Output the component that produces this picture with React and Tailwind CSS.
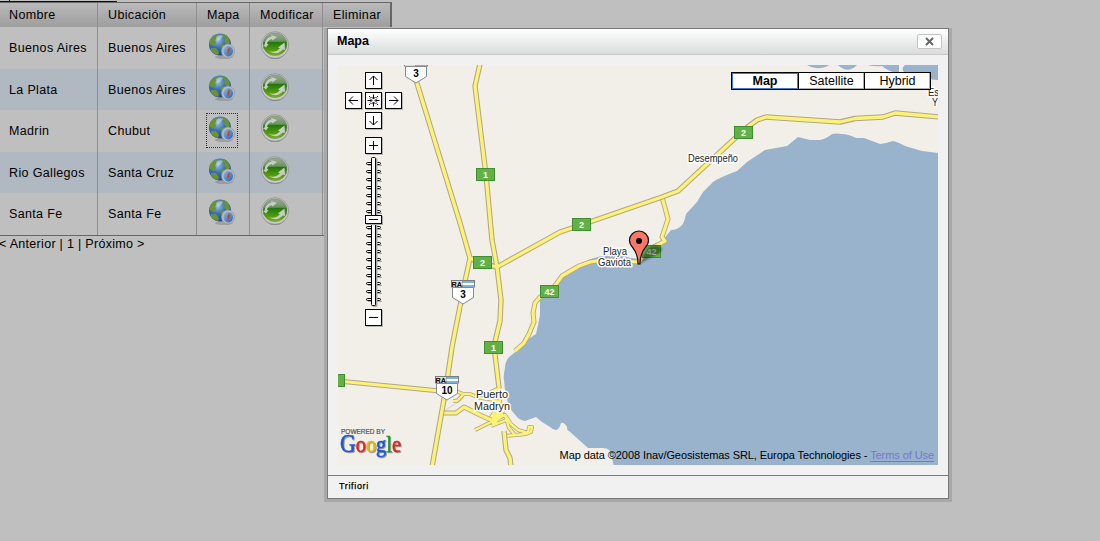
import React from "react";

const rows = [
  { name: "Buenos Aires", place: "Buenos Aires", h: "h-[42px]" },
  { name: "La Plata", place: "Buenos Aires", h: "h-[41px]" },
  { name: "Madrin", place: "Chubut", h: "h-[42px]", focused: true },
  { name: "Rio Gallegos", place: "Santa Cruz", h: "h-[41px]" },
  { name: "Santa Fe", place: "Santa Fe", h: "h-[42px]" },
];

const COLS = "grid grid-cols-[98px_99px_53px_73px_69px]";

function GlobeIcon() {
  return (
    <svg width="28" height="30" viewBox="0 0 28 30">
      <defs>
        <radialGradient id="sea" cx="0.4" cy="0.3" r="0.75">
          <stop offset="0" stopColor="#9cc0e0" />
          <stop offset="0.45" stopColor="#3a70b8" />
          <stop offset="1" stopColor="#1d4488" />
        </radialGradient>
        <linearGradient id="dial" x1="0" y1="0" x2="1" y2="1">
          <stop offset="0" stopColor="#8fb2d6" />
          <stop offset="1" stopColor="#2a66b2" />
        </linearGradient>
      </defs>
      <ellipse cx="16" cy="25" rx="9" ry="2" fill="#8a8a8a" opacity="0.6" />
      <circle cx="12" cy="12.500" r="11" fill="url(#sea)" />
      <path d="M2 8Q5 3 9 2.500L10 5L7 8L8 11L5 14L2 12ZM13 2Q18 2 21 7L22 11L19 13L16 9L17 6L14 5ZM3 16L8 16L11 20L10 23Q5 22 3 18ZM13 12L17 13L15 17L12 15Z" fill="#6a9430" />
      <path d="M8 5Q12 2 15 4L12 8L9 9Z" fill="#c6d8e6" opacity="0.6" />
      <ellipse cx="20" cy="19" rx="6.500" ry="7" fill="#b4bbc3" stroke="#8c949d" strokeWidth="0.7" />
      <ellipse cx="20.300" cy="19.300" rx="4.700" ry="5.200" fill="url(#dial)" />
      <path d="M19.500 22.500L19.800 17L21.800 15.500L21.200 20Z" fill="#c43a22" />
    </svg>
  );
}

function RefreshIcon() {
  return (
    <svg width="30" height="31" viewBox="0 0 30 31">
      <defs>
        <linearGradient id="leaf" x1="0" y1="0" x2="0" y2="1">
          <stop offset="0" stopColor="#9aac94" />
          <stop offset="0.36" stopColor="#6b945e" />
          <stop offset="0.42" stopColor="#23780b" />
          <stop offset="1" stopColor="#77b414" />
        </linearGradient>
      </defs>
      <ellipse cx="15" cy="17" rx="12.500" ry="12" fill="#666a66" />
      <ellipse cx="15" cy="15" rx="13.700" ry="13.300" fill="#cacaca" stroke="#909090" strokeWidth="0.8" />
      <ellipse cx="15" cy="14.300" rx="12" ry="11.300" fill="url(#leaf)" stroke="#66825f" strokeWidth="0.5" />
      <path d="M4.500 15Q5 8 11.500 6.500L11 5L17 7L12.500 10.500L12 9Q7.500 10 7 14L8.500 14L6 17.500L3 15Z" fill="#c6cdc2" />
      <path d="M9 21Q15 23.500 20 18.500L18 17.500L24.500 12.500L25 20L22.800 19.500Q17 26 9 21Z" fill="#c6cdc2" />
    </svg>
  );
}

function Cell({ children, last }) {
  return (
    <div className={last ? "flex items-center pt-px pl-[10px]" : "flex items-center border-r border-[#8f8f8f] pt-px pl-[9px] nth-2:pl-[10px] nth-3:pl-[10px] nth-4:pl-[10px]"}>
      {children}
    </div>
  );
}

function PlacesTable() {
  return (
    <div className="w-[392px]">
      <div className={COLS + " h-[25px] border-t border-r-2 border-[#666] bg-linear-to-b from-[#bababa] to-[#9e9e9e]"}>
        <Cell>Nombre</Cell>
        <Cell>Ubicación</Cell>
        <Cell>Mapa</Cell>
        <Cell>Modificar</Cell>
        <Cell last>Eliminar</Cell>
      </div>
      {rows.map((r, i) => (
        <div key={r.name} className={COLS + " " + r.h + (i % 2 ? " bg-[#b0b8c1]" : " bg-[#bfbfbf]")}>
          <Cell>{r.name}</Cell>
          <Cell>{r.place}</Cell>
          <div className="flex items-start border-r border-[#8f8f8f] pt-[3px] pl-[9px]">
            <div className={"flex h-[35px] w-8 items-start border border-dotted pt-[1px] pl-[1px] " + (r.focused ? "border-[#4a1590]" : "border-transparent")}>
              <GlobeIcon />
            </div>
          </div>
          <div className="flex items-start border-r border-[#8f8f8f] pt-[3px] pl-[10px]">
            <RefreshIcon />
          </div>
          <div />
        </div>
      ))}
      <div className="h-px bg-[#666]" />
    </div>
  );
}

const ROADS = [
  "M416 80L460 223L470 258L465 281L452 347L446 388L432 467",
  "M480 64L475 86L486 175L492 240L497 267L501 300L500 321L494 346L499 388",
  "M470 258L480 263L497 267L560 232L581 225L662 197L678 191L745 129L757 120L766 117L840 122L855 118.500L883 117L895 113L939 117",
];
const MINOR = [
  "M338 381L440 391",
  "M662 197L668 219L662 237L665 241L650 249L639 262L602 260L590 262L579 266L562 276L557 283L549 293L540 297L535 303L533 313L534 322L529 334L524 343L515 351",
  "M442 413L456 413L464 407L480 415L491 420",
];
const STREETS = [
  "M456 391L463 394L470 394L480 398L490 399L499 402M453 401L457 401L463 395",
  "M499 388L489 393M499 388L500 403L490 419",
  "M475 430L505 415L511 424L518 430L528 433L529 427L532 427L531 432L526 434L506 436",
  "M489 419L503 411L499 403M503 411L494 424L489 419M491 426L509 419M505 415L509 428L515 435",
];

function Roads({ list, outer, inner }) {
  return (
    <g fill="none" strokeLinejoin="round">
      {list.map((d) => <path key={d} d={d} stroke="#b2a58d" strokeWidth={outer} />)}
      {list.map((d) => <path key={d + "i"} d={d} stroke="#fcf374" strokeWidth={inner} />)}
    </g>
  );
}

function GreenSign({ x, y, text }) {
  return (
    <g>
      <rect x={x + 0.5} y={y + 0.5} width="18" height="12" fill="#62b146" stroke="#3f8f32" />
      {text && <text x={x + 9.500} y={y + 10} textAnchor="middle" fontSize="9" fontWeight="bold" fill="#fff">{text}</text>}
    </g>
  );
}

function RouteShield({ x, y, text, banner = true }) {
  return (
    <g>
      <rect x={x} y={y} width="24" height="7.500" fill="#777c7e" />
      <rect x={x + 1} y={y + 1} width="10" height="6" fill="#ddd" />
      {banner && <text x={x + 0.5} y={y + 7} fontSize="7" fontWeight="bold" textLength="10.500" lengthAdjust="spacingAndGlyphs">RA</text>}
      <rect x={x + 11.500} y={y + 1} width="11.500" height="6" fill="#7db5d6" />
      <rect x={x + 11.500} y={y + 3} width="11.500" height="2" fill="#fff" />
      <path d={`M${x + 1.500} ${y + 7.500}H${x + 22.500}V${y + 17.500}L${x + 12} ${y + 24}L${x + 1.500} ${y + 17.500}Z`} fill="#fff" stroke="#888" />
      <text x={x + 12} y={y + 18} textAnchor="middle" fontSize="10" fontWeight="bold">{text}</text>
    </g>
  );
}

function Halo({ x, y, size, len, children }) {
  return (
    <text x={x} y={y} fontSize={size} textLength={len} lengthAdjust="spacingAndGlyphs" fill="#222" style={{ paintOrder: "stroke" }} stroke="#fff" strokeWidth="3" strokeLinejoin="round">
      {children}
    </text>
  );
}

function MapDrawing() {
  return (
    <svg className="block" width="600" height="400" viewBox="338 65 600 400" fontFamily="Liberation Sans, Arial, sans-serif">
      <defs>
        <filter id="soft"><feGaussianBlur stdDeviation="1.200" /></filter>
      </defs>
      <rect x="338" y="65" width="600" height="400" fill="#f2efe9" />
      <g fill="#99b3cc">
        <path d="M938 153L922 151L905 146Q898 142 893 141L886 143L880 144L872 141L864 138L856 138Q848 134 842 134Q836 133 832 134Q826 139 820 140L810 140L798 137L787 146L765 150L747 162L737 171Q718 178 713 182L703 192L697 202L686 214Q684 224 681 226Q677 230 671 230L663 240Q659 249 655 250L642 259L630 258L625 256L601 256L588 260L580 267L563 277L556 285L553 298L540 298L540 315L538 325L536 334L530 338L524 345L518 350L509 357Q505 362 505 368Q503 377 504 380L505 390L508 403Q509 408 512 411L518 418Q522 421 525 421L536 417L542 422L550 427Q553 430 556 430Q559 430 561 423Q564 422 567 427Q567 431 569 431L588 448L602 448Q608 448 610 451L614 466H938Z" />
        <path d="M807 65Q816 71 828 66L829 65ZM838 65Q847 74 856 66L857 65ZM868 65Q875 67 882 66Q892 74 899 72V65ZM905 65Q900 69 905 73L920 76Q930 80 938 80V65Z" />
      </g>
      <path d="M444 411L463 399" stroke="#d8d4cb" />
      <Roads list={STREETS} outer="4" inner="2.400" />
      <Roads list={MINOR} outer="5" inner="3.200" />
      <Roads list={["M504 431L506 450L510 458L511 467", ...ROADS]} outer="5.400" inner="3.300" />
      <path d="M491 420L498 409L504 415L494 425" fill="#fcf374" />
      <GreenSign x={476} y={168} text="1" />
      <GreenSign x={473} y={256} text="2" />
      <GreenSign x={572} y={218} text="2" />
      <GreenSign x={734} y={126} text="2" />
      <GreenSign x={540} y={285} text="42" />
      <GreenSign x={484} y={341} text="1" />
      <GreenSign x={326} y={374} />
      <GreenSign x={642} y={245} text="42" />
      <RouteShield x={404} y={59} text="3" banner={false} />
      <RouteShield x={451} y={280} text="3" />
      <RouteShield x={435} y={376} text="10" />
      <Halo x={688} y={162} size={10} len={50}>Desempeño</Halo>
      <Halo x={603} y={255} size={10} len={24}>Playa</Halo>
      <Halo x={598} y={266} size={10} len={33}>Gaviota</Halo>
      <Halo x={476} y={398} size={11.5} len={32}>Puerto</Halo>
      <Halo x={474} y={410} size={11.5} len={36}>Madryn</Halo>
      <Halo x={928} y={96} size={10} len={11}>Es</Halo>
      <Halo x={932} y={106} size={10} len={6}>Y</Halo>
      <path d="M639 264L646 251Q650 244 659 246Q665 249 658 254L646 260Z" fill="#000" opacity="0.42" filter="url(#soft)" />
      <path d="M638 264Q638 254 633 248Q629.500 244 629.500 240.500A9.300 9.300 0 0 1 648.500 240.500Q648.500 244 645 248Q640 254 640 264Z" fill="#fd766a" stroke="#111" strokeWidth="1.200" />
      <circle cx="639" cy="241" r="3" fill="#000" />
      <text x="341" y="434" fontSize="6.500" fill="#555" stroke="#555" strokeWidth="0.2" textLength="44">POWERED BY</text>
      <text x="340" y="452" fontFamily="Liberation Serif, serif" fontSize="23.500" strokeWidth="0.6" textLength="61" lengthAdjust="spacingAndGlyphs" className="drop-shadow-[1px_1px_0.5px_rgba(0,0,0,0.35)]"><tspan fill="#1c55d8" stroke="#1c55d8" fontSize="25">G</tspan><tspan fill="#d92a20" stroke="#d92a20">o</tspan><tspan fill="#e5b80b" stroke="#e5b80b">o</tspan><tspan fill="#1c55d8" stroke="#1c55d8">g</tspan><tspan fill="#189a28" stroke="#189a28">l</tspan><tspan fill="#d92a20" stroke="#d92a20">e</tspan></text>
    </svg>
  );
}

const BUTTONS = [
  [27, 7, "M8.500 13V4M4.500 8L8.500 4L12.500 8"],
  [7, 27, "M13 8.500H4M8 4.500L4 8.500L8 12.500"],
  [27, 27, "M8.500 2.500V6.500M6.500 5L8.500 7L10.500 5M8.500 14.500V10.500M6.500 12L8.500 10L10.500 12M2.500 8.500H6.500M5 6.500L7 8.500L5 10.500M14.500 8.500H10.500M12 6.500L10 8.500L12 10.500M4 4L5.500 5.500M13 4L11.500 5.500M4 13L5.500 11.500M13 13L11.500 11.500"],
  [47, 27, "M4 8.500H13M9 4.500L13 8.500L9 12.500"],
  [27, 47, "M8.500 4V13M4.500 9L8.500 13L12.500 9"],
  [27, 72, "M8.500 4V13M4 8.500H13"],
  [27, 244, "M4 8.500H13"],
];

function MapControls() {
  return (
    <svg className="absolute top-0 left-0" width="75" height="275" viewBox="0 0 75 275">
      {BUTTONS.map(([x, y, d]) => (
        <g key={x + "-" + y} transform={`translate(${x} ${y})`}>
          <rect x="1" y="1" width="17" height="17" fill="#aaa" opacity="0.8" />
          <rect x="0.5" y="0.5" width="16" height="16" fill="#fff" stroke="#000" />
          <path d={d} fill="none" stroke="#000" />
        </g>
      ))}
      {Array.from({ length: 18 }, (_, i) => (
        <g key={i}>
          <path d={`M30 ${100.500 + i * 8}H44`} stroke="#aaa" />
          <rect x="28.500" y={97.500 + i * 8} width="14" height="2" rx="1" fill="#fff" stroke="#000" />
        </g>
      ))}
      <rect x="34.500" y="93" width="5" height="149" rx="1.500" fill="#aaa" />
      <rect x="33.500" y="92.500" width="4" height="148" rx="1" fill="#fff" stroke="#000" />
      <rect x="28" y="151" width="17" height="9" fill="#aaa" />
      <rect x="27.500" y="150.500" width="16" height="8" fill="#fff" stroke="#000" />
      <path d="M31 154.500H40" stroke="#000" />
    </svg>
  );
}

function MapDialog() {
  return (
    <div className="absolute top-7 left-[327px] flex h-[471px] w-[622px] flex-col border border-[#7a7a7a] bg-[#f1f1f1] shadow-[0_0_0_3px_#a8a8a8] [clip-path:inset(0_-3px_-3px_-3px)]">
      <div className="flex h-[26px] items-center justify-between border-b border-[#c8c8c8] bg-linear-to-b from-white to-[#dadcdc] pr-1.5 pl-[9px]">
        <span className="text-[12.5px] font-bold">Mapa</span>
        <div className="flex h-[15px] w-[25px] items-center justify-center rounded-[2px] border border-[#c4c4c4] bg-white">
          <svg width="9" height="9" viewBox="0 0 9 9"><path d="M1 1L8 8M8 1L1 8" stroke="#666" strokeWidth="2" /></svg>
        </div>
      </div>
      <div className="px-[10px] pt-[10px]">
        <div className="relative h-[400px] w-[600px] overflow-hidden">
          <MapDrawing />
          <MapControls />
          <div className="absolute top-[7px] right-[7px] flex h-[18px] w-[200px] border border-black bg-white text-center text-[12.5px] leading-4">
            <div className="w-[66px] border border-[#4878c8] leading-[14px] font-bold">Map</div>
            <div className="w-[67px] border-r border-l border-black shadow-[inset_-1px_-1px_#b0b0b0]">Satellite</div>
            <div className="flex-1 shadow-[inset_-1px_-1px_#b0b0b0]">Hybrid</div>
          </div>
          <div className="absolute right-1 bottom-[3px] text-[11px] leading-[14px] tracking-[-0.08px] whitespace-nowrap">
            Map data ©2008 Inav/Geosistemas SRL, Europa Technologies - <span className="border-b border-[#7777cc] text-[#7777cc]">Terms of Use</span>
          </div>
        </div>
      </div>
      <div className="mt-[10px] flex flex-1 items-center border-t border-[#7a7a7a] pl-[11px] text-[9px] tracking-[0.65px] [-webkit-text-stroke:0.25px_#000]">Trifiori</div>
    </div>
  );
}

export default function App() {
  return (
    <div className="relative h-[541px] w-[1100px] overflow-hidden bg-[#bfbfbf] font-['Liberation_Sans',Arial,sans-serif] text-[12px] text-black">
      <div className="flex h-0.5 flex-col">
        <div className="ml-[9px] h-px w-px bg-[#00009a]" />
        <div className="h-px w-[117px] bg-[#00009a]" />
      </div>
      <div className="text-[12.5px]">
        <div className="tracking-[0.35px]">
          <PlacesTable />
        </div>
        <div className="-ml-px leading-4 tracking-[0.3px]">&lt; Anterior | 1 | Próximo &gt;</div>
      </div>
      <MapDialog />
    </div>
  );
}
